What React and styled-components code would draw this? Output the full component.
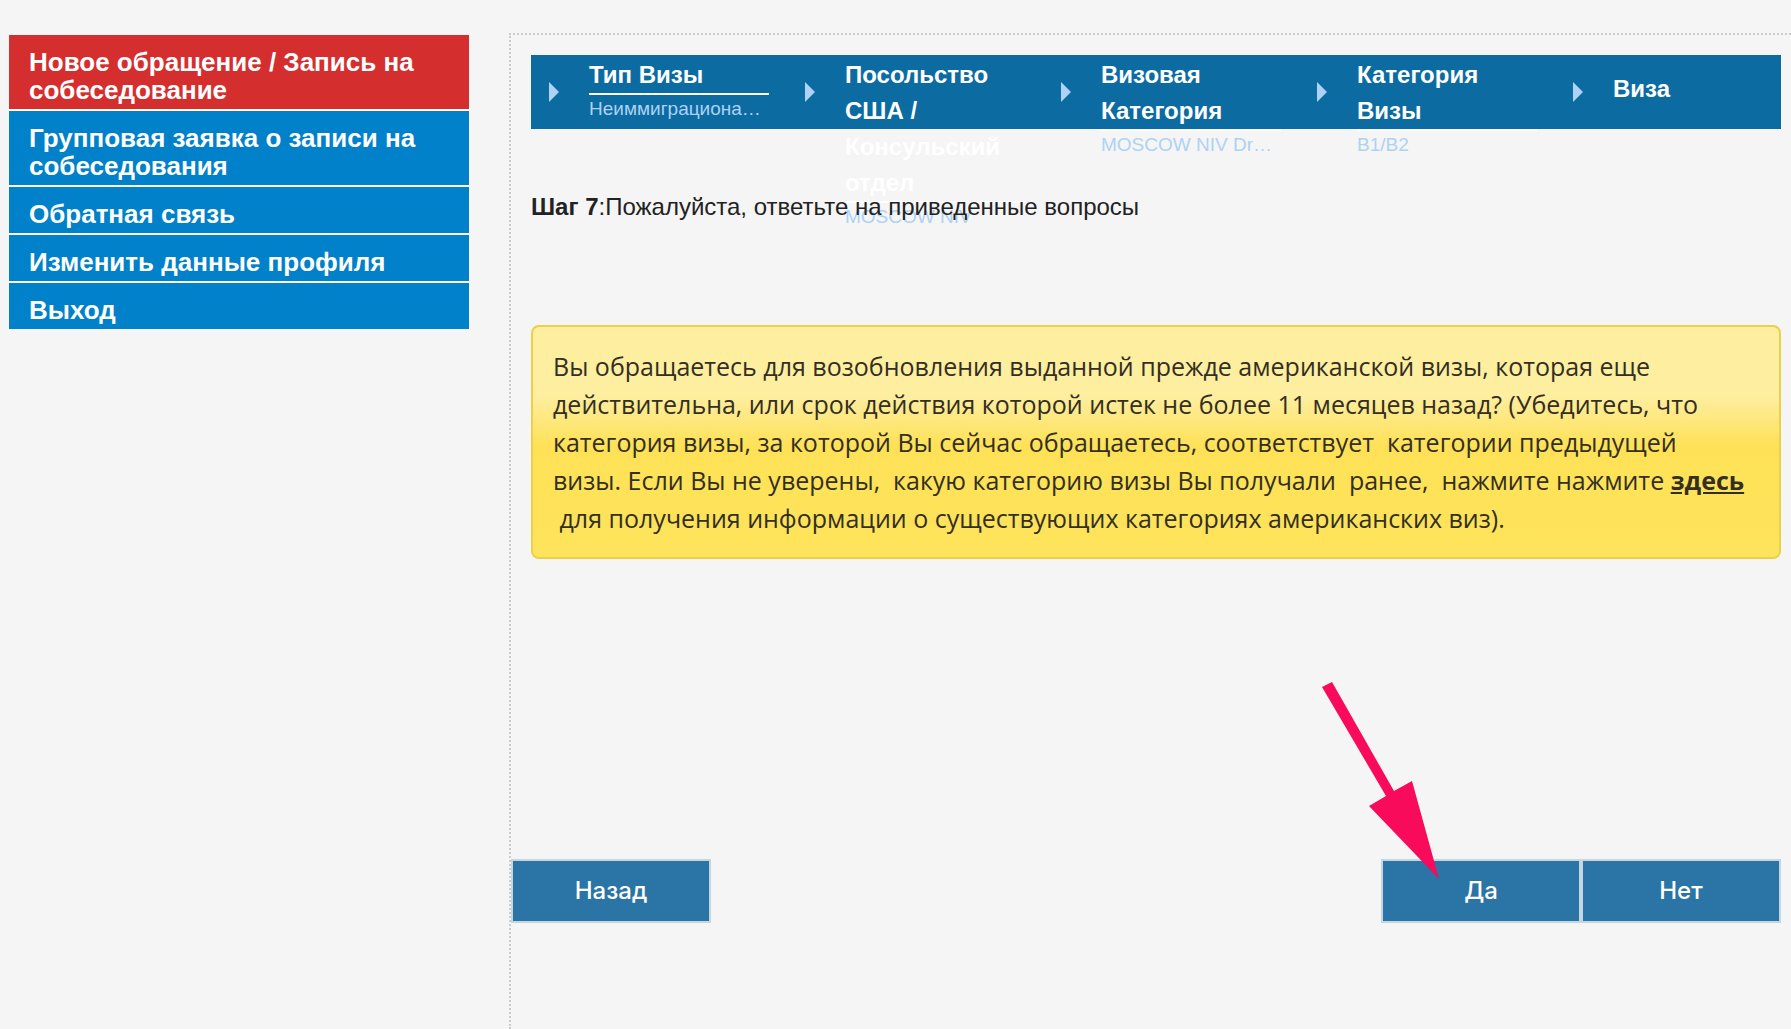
import React from "react";
import styled, { createGlobalStyle } from "styled-components";

const GlobalStyle = createGlobalStyle`
  * {
    box-sizing: border-box;
  }

  body {
    margin: 0;
    background-color: #f5f5f5;
    color: #222;
    font-family: "Liberation Sans", Arial, sans-serif;
  }
`;

const Page = styled.div`
  display: flex;
  gap: 40px;
  min-height: 100vh;
  padding: 33px 0 0 9px;
`;

const Sidebar = styled.nav`
  flex: 0 0 460px;
  padding-top: 2px;
`;

const MenuList = styled.ul`
  display: flex;
  flex-direction: column;
  gap: 2px;
  margin: 0;
  padding: 0;
  list-style-type: none;
  background-color: #fff;
`;

const MenuLink = styled.a`
  display: block;
  padding: 13px 20px 5px;
  background-color: ${({ $active }) => ($active ? "#d52e2f" : "#0081c9")};
  color: #fff;
  font-size: 26px;
  font-weight: bold;
  line-height: 28px;
  text-decoration: none;
`;

const Main = styled.main`
  flex: 1;
  min-width: 0;
  padding: 20px 10px 0 0;
  border-top: 2px dotted #ccc;
  border-left: 2px dotted #ccc;
`;

const Content = styled.div`
  padding-left: 20px;
`;

const StepBar = styled.ol`
  display: flex;
  height: 74px;
  margin: 0;
  padding: 0;
  list-style-type: none;
  background-color: #0c6ba1;
`;

const Step = styled.li`
  display: flex;
  flex: 0 0 256px;
  gap: 30px;
  padding-left: 18px;

  &:last-child {
    flex: 1 1 0;
    min-width: 0;
  }
`;

const StepArrow = styled.svg`
  flex: none;
  width: 10px;
  height: 20px;
  margin-top: 27px;
  fill: #add2f5;
`;

const StepText = styled.div`
  flex: 0 1 180px;
  padding-top: ${({ $single }) => ($single ? "16px" : "2px")};
`;

const StepTitle = styled.div`
  color: #fff;
  font-size: 24px;
  font-weight: bold;
  line-height: 36px;
`;

const StepValue = styled.div`
  border-top: 2px solid #fff;
  color: #add2f5;
  font-size: 19px;
  line-height: 28px;
  white-space: nowrap;
`;

const Heading = styled.p`
  position: relative;
  margin: 60px 0 100px;
  font-size: 24px;
  line-height: 36px;
`;

const Question = styled.div`
  padding: 20px;
  border: 2px solid #ecd04a;
  border-radius: 8px;
  background: linear-gradient(#feeea0 0%, #feeea0 30%, #fee156 52%, #fee45c 100%);
  color: #332f22;
  font-family: "Open Sans", sans-serif;
  font-size: 25px;
  font-weight: 500;
  line-height: 38px;
  white-space: pre-wrap;

  a {
    color: inherit;
    font-weight: bold;
  }
`;

const Actions = styled.div`
  display: flex;
  justify-content: space-between;
  margin-top: 300px;
`;

const Answers = styled.div`
  position: relative;
  display: flex;
`;

const Button = styled.button`
  width: 200px;
  height: 64px;
  padding-bottom: 3px;
  border: 2px solid #c6d6e0;
  background-color: #2a74a6;
  color: #fff;
  font-family: Inter, sans-serif;
  font-size: 24px;
  font-weight: 500;
  cursor: pointer;
`;

const Pointer = styled.svg`
  position: absolute;
  right: 340px;
  bottom: 44px;
  width: 120px;
  height: 200px;
  fill: #f70b5a;
  pointer-events: none;
`;

const menu = [
  { title: "Новое обращение / Запись на собеседование", active: true },
  { title: "Групповая заявка о записи на собеседования" },
  { title: "Обратная связь" },
  { title: "Изменить данные профиля" },
  { title: "Выход" },
];

const steps = [
  { title: "Тип Визы", value: "Неиммиграциона…" },
  { title: "Посольство США / Консульский отдел", value: "MOSCOW NIV" },
  { title: "Визовая Категория", value: "MOSCOW NIV Dr…" },
  { title: "Категория Визы", value: "B1/B2" },
  { title: "Виза" },
];

const App = () => {
  return (
    <>
      <GlobalStyle />
      <Page>
        <Sidebar>
          <MenuList>
            {menu.map((item) => (
              <li key={item.title}>
                <MenuLink href="#" $active={item.active}>
                  {item.title}
                </MenuLink>
              </li>
            ))}
          </MenuList>
        </Sidebar>
        <Main>
          <Content>
            <StepBar>
              {steps.map((step) => (
                <Step key={step.title}>
                  <StepArrow viewBox="0 0 10 20">
                    <path d="M0 0 L10 10 L0 20 Z" />
                  </StepArrow>
                  <StepText $single={!step.value}>
                    <StepTitle>{step.title}</StepTitle>
                    {step.value && <StepValue>{step.value}</StepValue>}
                  </StepText>
                </Step>
              ))}
            </StepBar>
            <Heading>
              <b>Шаг 7</b>:Пожалуйста, ответьте на приведенные вопросы
            </Heading>
            <Question>
              Вы обращаетесь для возобновления выданной прежде американской визы, которая еще
              <br />
              действительна, или срок действия которой истек не более 11 месяцев назад? (Убедитесь, что
              <br />
              {"категория визы, за которой Вы сейчас обращаетесь, соответствует  категории предыдущей"}
              <br />
              {"визы. Если Вы не уверены,  какую категорию визы Вы получали  ранее,  нажмите нажмите "}
              <a href="#">здесь</a>
              <br />
              {" для получения информации о существующих категориях американских виз)."}
            </Question>
          </Content>
          <Actions>
            <Button type="button">Назад</Button>
            <Answers>
              <Button type="button">Да</Button>
              <Button type="button">Нет</Button>
              <Pointer viewBox="0 0 120 200">
                <path d="M1 8 L11 3 L73 112 L91 102 L118 200 L48 127 L65 117 Z" />
              </Pointer>
            </Answers>
          </Actions>
        </Main>
      </Page>
    </>
  );
};

export default App;
